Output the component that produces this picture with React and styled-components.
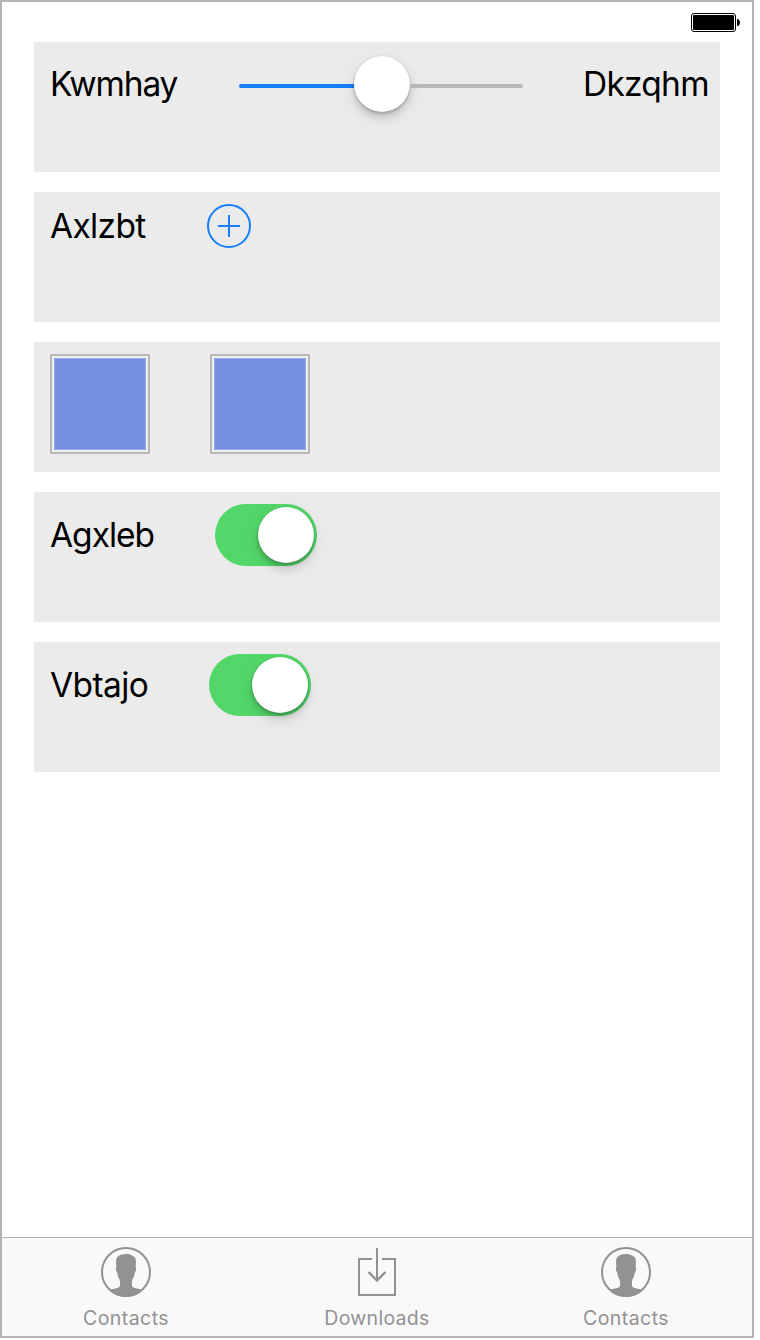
import React from 'react';
import styled, { createGlobalStyle } from 'styled-components';

const GlobalStyle = createGlobalStyle`
  * { box-sizing: border-box; }
  body { margin: 0; background: #fff; font-family: Inter, 'Liberation Sans', sans-serif; }
`;

const Screen = styled.div`
  width: 754px;
  height: 1338px;
  border: 2px solid #b3b3b3;
  background: #fff;
  display: flex;
  flex-direction: column;
`;

const StatusBar = styled.header`
  height: 40px;
  padding: 11px 11px 0 0;
  display: flex;
  justify-content: flex-end;
`;

const Rows = styled.main`
  flex: 1;
  padding: 0 32px;
  display: flex;
  flex-direction: column;
  gap: 20px;
`;

const Row = styled.section`
  height: 130px;
  padding: 12px 11px 0 16px;
  background: #ebebeb;
`;

const Line = styled.div`
  height: ${(p) => p.$height}px;
  display: flex;
  align-items: center;
`;

const Label = styled.span`
  flex: none;
  width: ${(p) => p.$width}px;
  font-size: 33.5px;
  line-height: 42px;
  letter-spacing: ${(p) => p.$spacing || 0}px;
  color: #000;
  white-space: nowrap;
`;

const Slider = styled.div`
  flex: none;
  width: 284px;
  height: 60px;
  margin-right: 60px;
  display: flex;
  align-items: center;
`;

const Track = styled.div`
  flex: ${(p) => (p.$active ? '0 0 115px' : '1')};
  height: 4px;
  margin-top: 4px;
  border-radius: ${(p) => (p.$active ? '2px 0 0 2px' : '0 2px 2px 0')};
  background: ${(p) => (p.$active ? '#157efb' : '#b7b7b7')};
`;

const Knob = styled.div`
  flex: none;
  width: 56px;
  height: 56px;
  border-radius: 50%;
  background: #fff;
  box-shadow: 0 6px 8px rgba(0, 0, 0, 0.15), 0 2px 3px rgba(0, 0, 0, 0.18), 0 0 1px rgba(0, 0, 0, 0.2),
    0 4px 26px rgba(0, 0, 0, 0.06);
`;

const AddButton = styled.button`
  width: 44px;
  height: 44px;
  padding: 0;
  border: 0;
  background: none;
  svg { display: block; }
`;

const Tiles = styled.div`
  display: flex;
  gap: 60px;
`;

const Tile = styled.div`
  width: 100px;
  height: 100px;
  border: 2px solid #b9b9b9;
  padding: 1px;
  background: #e4e5e4;
`;

const TileFill = styled.div`
  width: 94px;
  height: 94px;
  border: 1px solid #f4f7fe;
  background: #758fe2;
  box-shadow: inset 0 0 0 1px #90a4e9;
`;

const Switch = styled.div`
  flex: none;
  width: 102px;
  height: 62px;
  padding: 3px;
  border-radius: 31px;
  background: #53d769;
  display: flex;
  justify-content: flex-end;
`;

const TabBar = styled.nav`
  height: 99px;
  border-top: 1px solid #b2b2b2;
  background: #f9f9f9;
  display: flex;
`;

const Tab = styled.a`
  flex: 1;
  padding-top: 9px;
  display: flex;
  flex-direction: column;
  align-items: center;
  color: #929292;
  svg { display: block; margin-bottom: 9px; }
`;

const TabLabel = styled.span`
  margin-right: ${(p) => p.$nudge || 0}px;
  font-size: 19.5px;
  line-height: 24px;
  letter-spacing: ${(p) => p.$spacing}px;
`;

const Battery = () => (
  <svg width="50" height="20" viewBox="0 0 50 20">
    <rect x="0.5" y="0.5" width="44" height="18" rx="2.5" fill="#fff" stroke="#000" />
    <rect x="2" y="2" width="41" height="15" rx="1" fill="#000" />
    <path d="M46 6h1q2 1 2 3.500t-2 3.500h-1z" fill="#000" />
  </svg>
);

const PlusIcon = () => (
  <svg width="44" height="44" viewBox="0 0 44 44" fill="none" stroke="#157efb" strokeWidth="2">
    <circle cx="22" cy="22" r="21" />
    <path d="M22 11v22M11 22h22" />
  </svg>
);

const ContactIcon = () => (
  <svg width="52" height="50" viewBox="0 0 52 50">
    <circle cx="25" cy="25" r="24" fill="none" stroke="currentColor" strokeWidth="2" />
    <path
      fill="currentColor"
      d="M25 7C20.500 7 17 8.500 15.600 11C14.800 13 15 16 15.300 20C14.700 21 15 24.500 16.200 25.500C16.500 28.500 17.300 31 18.600 32.500C19.200 35 19.300 38 18.700 39.500C17.500 41.500 12 41.500 8.500 43C12.500 47.500 18.500 50 25 50S37.500 47.500 41.500 43C38 41.500 32.500 41.500 31.300 39.500C30.700 38 30.800 35 31.400 32.500C32.700 31 33.500 28.500 33.800 25.500C35 24.500 35.500 21 34.700 20C35 16 35.200 13.500 34.300 11C33.300 9.500 32 9 31 8.500C29.500 7.400 27.500 7 25 7Z"
    />
  </svg>
);

const DownloadIcon = () => (
  <svg width="52" height="50" viewBox="0 0 52 50" fill="none" stroke="currentColor" strokeWidth="2">
    <path d="M21 12H8v36h36V12H31M26 1v32" />
    <path d="M17.500 25l8.500 8.500l8.500-8.500" strokeWidth="2.4" />
  </svg>
);

export default function App() {
  return (
    <>
      <GlobalStyle />
      <Screen>
        <StatusBar><Battery /></StatusBar>
        <Rows>
          <Row>
            <Line $height={60}>
              <Label $width={189} $spacing={-1.15}>Kwmhay</Label>
              <Slider>
                <Track $active />
                <Knob />
                <Track />
              </Slider>
              <Label $width={126} $spacing={-0.75}>Dkzqhm</Label>
            </Line>
          </Row>
          <Row>
            <Line $height={44}>
              <Label $width={157} $spacing={-0.65}>Axlzbt</Label>
              <AddButton aria-label="Add"><PlusIcon /></AddButton>
            </Line>
          </Row>
          <Row>
            <Tiles>
              <Tile><TileFill /></Tile>
              <Tile><TileFill /></Tile>
            </Tiles>
          </Row>
          <Row>
            <Line $height={62}>
              <Label $width={165} $spacing={-1}>Agxleb</Label>
              <Switch><Knob /></Switch>
            </Line>
          </Row>
          <Row>
            <Line $height={62}>
              <Label $width={159} $spacing={-0.6}>Vbtajo</Label>
              <Switch><Knob /></Switch>
            </Line>
          </Row>
        </Rows>
        <TabBar>
          <Tab><ContactIcon /><TabLabel $spacing={0.45} $nudge={2}>Contacts</TabLabel></Tab>
          <Tab><DownloadIcon /><TabLabel $spacing={0.3}>Downloads</TabLabel></Tab>
          <Tab><ContactIcon /><TabLabel $spacing={0.45} $nudge={2}>Contacts</TabLabel></Tab>
        </TabBar>
      </Screen>
    </>
  );
}
